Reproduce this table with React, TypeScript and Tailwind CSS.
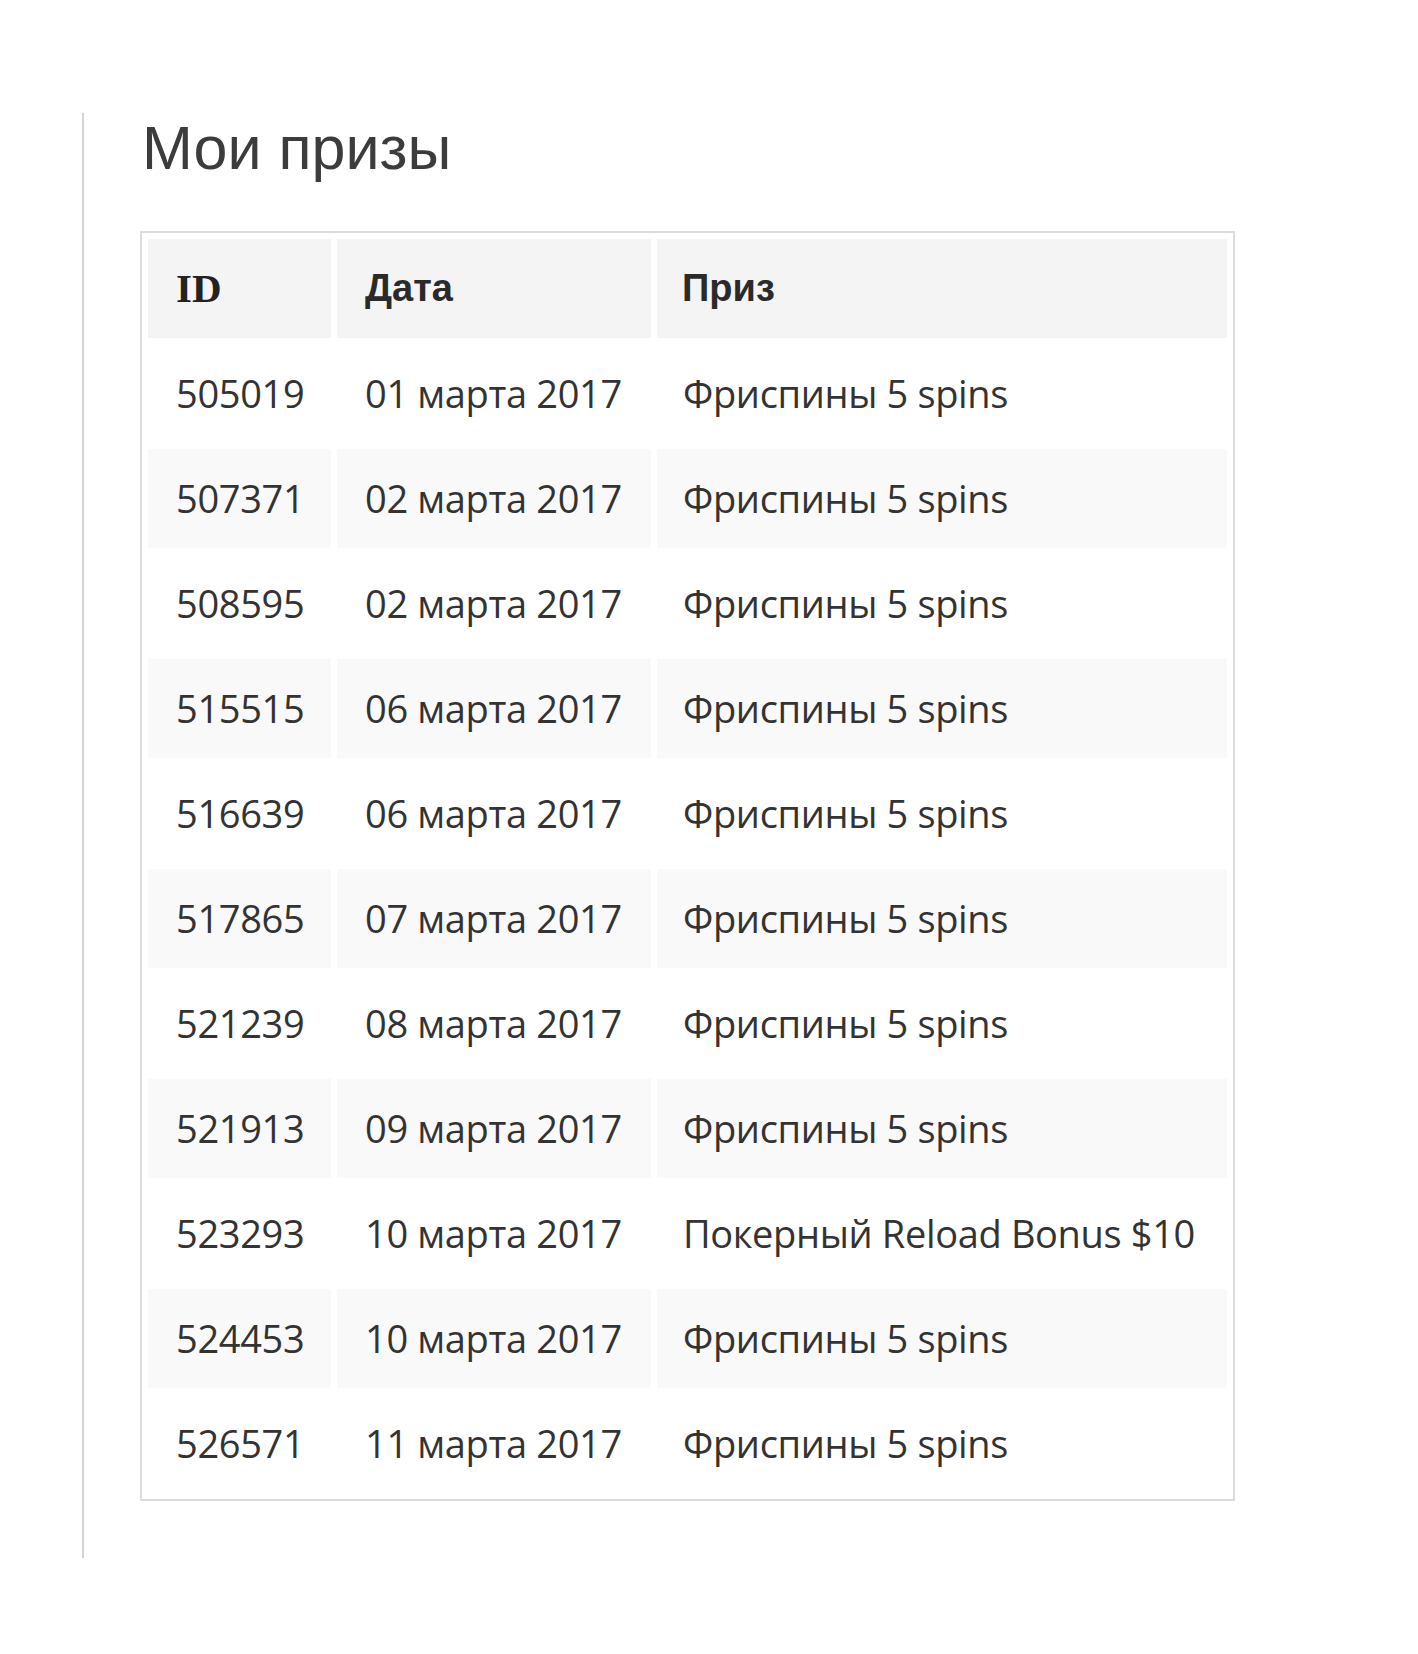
const rows = [
  { id: '505019', date: '01 марта 2017', prize: 'Фриспины 5 spins' },
  { id: '507371', date: '02 марта 2017', prize: 'Фриспины 5 spins' },
  { id: '508595', date: '02 марта 2017', prize: 'Фриспины 5 spins' },
  { id: '515515', date: '06 марта 2017', prize: 'Фриспины 5 spins' },
  { id: '516639', date: '06 марта 2017', prize: 'Фриспины 5 spins' },
  { id: '517865', date: '07 марта 2017', prize: 'Фриспины 5 spins' },
  { id: '521239', date: '08 марта 2017', prize: 'Фриспины 5 spins' },
  { id: '521913', date: '09 марта 2017', prize: 'Фриспины 5 spins' },
  { id: '523293', date: '10 марта 2017', prize: 'Покерный Reload Bonus $10' },
  { id: '524453', date: '10 марта 2017', prize: 'Фриспины 5 spins' },
  { id: '526571', date: '11 марта 2017', prize: 'Фриспины 5 spins' },
]

export default function App() {
  return (
    <div className="min-h-[1654px] bg-white pt-[113px] pl-[82px]">
      {/* блок "Мои призы" */}
      <div className="w-[1156px] border-l-[2px] border-[#d4d4d4] pl-[56px] pt-[5px] pb-[57px]">
        <h1 className="pl-[2px] text-[61px] leading-none font-normal text-[#3c3c3c] font-['Liberation_Sans',Arial,sans-serif]">
          Мои призы
        </h1>

        <table className="mt-[52px] w-[1095px] border-separate border-spacing-[6px] border-2 border-[#dcdcdc] text-[#333] font-['Open_Sans',sans-serif] text-[38px] tracking-[-0.35px]">
          <thead>
            <tr>
              <th className="w-[183px] h-[99px] bg-[#f4f4f4] pl-[28px] text-left align-middle font-bold text-[#222] text-[41px] tracking-normal font-['Liberation_Serif',serif]">
                ID
              </th>
              <th className="w-[314px] h-[99px] bg-[#f4f4f4] pl-[28px] text-left align-middle font-bold text-[#2a2a2a] text-[38px] tracking-normal font-['Liberation_Sans',Arial,sans-serif]">
                Дата
              </th>
              <th className="h-[99px] bg-[#f4f4f4] pl-[25px] text-left align-middle font-bold text-[#2a2a2a] text-[38px] tracking-normal font-['Liberation_Sans',Arial,sans-serif]">
                Приз
              </th>
            </tr>
          </thead>
          <tbody>
            {rows.map((r, i) => {
              const bg = i % 2 === 1 ? 'bg-[#f9f9f9]' : 'bg-white'
              return (
                <tr key={r.id}>
                  <td className={`h-[99px] pl-[28px] align-middle whitespace-nowrap ${bg}`}>{r.id}</td>
                  <td className={`h-[99px] pl-[28px] align-middle whitespace-nowrap ${bg}`}>{r.date}</td>
                  <td className={`h-[99px] pl-[26px] align-middle whitespace-nowrap ${bg}`}>{r.prize}</td>
                </tr>
              )
            })}
          </tbody>
        </table>
      </div>
    </div>
  )
}
